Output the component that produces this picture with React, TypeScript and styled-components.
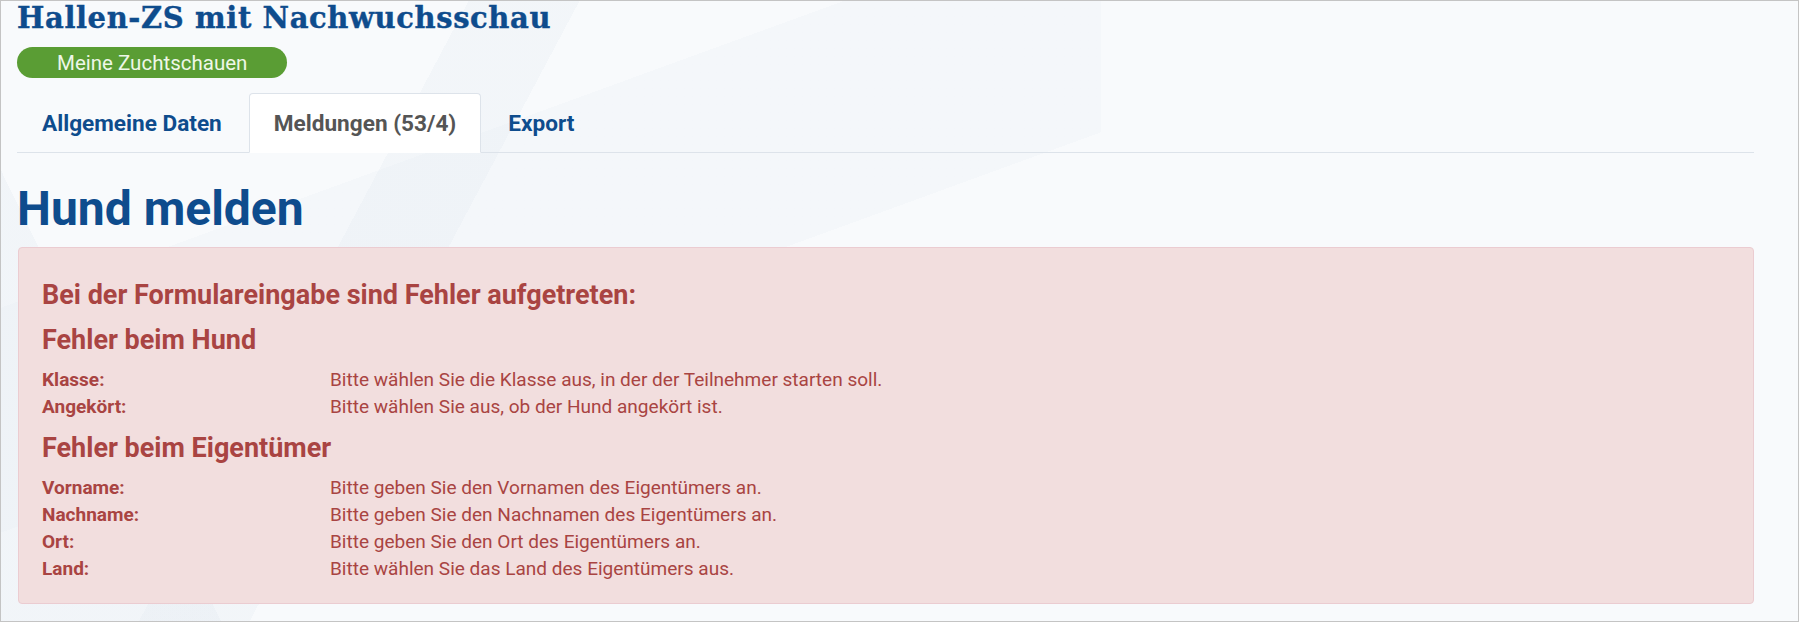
import React from "react";
import styled, { createGlobalStyle } from "styled-components";

const GlobalStyle = createGlobalStyle`
  html, body {
    margin: 0;
    padding: 0;
  }
  body {
    font-family: Roboto, "Noto Sans", Arial, sans-serif;
    background: #fff;
  }
  * {
    box-sizing: border-box;
  }
`;

const Page = styled.div`
  width: 1799px;
  height: 622px;
  overflow: hidden;
  border: 1px solid #c4c4c4;
  padding: 0 44px 0 16px;
  background-color: #f8fafc;
  background-image:
    linear-gradient(118deg, transparent 0 38%, rgba(222, 230, 238, 0.22) 38% 47%, transparent 47%),
    linear-gradient(64deg, rgba(226, 233, 240, 0.3) 0 22%, transparent 22%),
    linear-gradient(160deg, transparent 0 30%, rgba(232, 238, 244, 0.25) 30% 52%, transparent 52%);
  background-size: 900px 622px, 700px 622px, 1100px 622px;
  background-repeat: no-repeat;
`;

const Title = styled.h1`
  margin: 0;
  font-family: "DejaVu Serif", "Liberation Serif", serif;
  font-weight: 700;
  font-size: 29px;
  line-height: 34px;
  letter-spacing: 0.6px;
  color: #0e4c8d;
  -webkit-text-stroke: 0.4px #0e4c8d;
`;

const PillLink = styled.a`
  display: inline-flex;
  align-items: center;
  justify-content: center;
  height: 31px;
  margin-top: 12px;
  padding: 0 40px;
  border-radius: 16px;
  background: #5a9d34;
  color: #eef7e8;
  font-size: 20.5px;
  text-decoration: none;
`;

const TabBar = styled.ul`
  display: flex;
  margin: 15px 0 0;
  padding: 0;
  list-style: none;
  border-bottom: 1px solid #dde3ea;
`;

const Tab = styled.li<{ $active?: boolean }>`
  display: flex;
  align-items: center;
  height: 60px;
  margin: 0 2px -1px 0;
  padding: 0 24px;
  border: 1px solid ${({ $active }) => ($active ? "#dde3ea" : "transparent")};
  border-bottom-color: ${({ $active }) => ($active ? "#fff" : "transparent")};
  border-radius: 4px 4px 0 0;
  background: ${({ $active }) => ($active ? "#fff" : "transparent")};
  color: ${({ $active }) => ($active ? "#555" : "#0e4c8d")};
  font-size: 22.6px;
  font-weight: 700;
`;

const Heading = styled.h2`
  margin: 30px 0 11px;
  font-size: 48px;
  font-weight: 700;
  line-height: 52.8px;
  color: #0e4c8d;
`;

const Alert = styled.div`
  margin-left: 1px;
  padding: 32px 23px 21px;
  border: 1px solid #ebccd1;
  border-radius: 4px;
  background: #f2dede;
  color: #a94442;
`;

const AlertTitle = styled.h3`
  margin: 0 0 15px;
  font-size: 27px;
  font-weight: 700;
  line-height: 30px;
`;

const GroupTitle = styled.h4`
  margin: 0 0 11px;
  font-size: 27px;
  font-weight: 700;
  line-height: 30px;
`;

const ErrorList = styled.dl`
  display: grid;
  grid-template-columns: 288px 1fr;
  margin: 0 0 13px;
  font-size: 19.05px;
  line-height: 27px;

  &:last-child {
    margin-bottom: 0;
  }
`;

const Field = styled.dt`
  font-weight: 700;
`;

const Message = styled.dd`
  margin: 0;
`;

type ErrorGroup = { title: string; errors: [string, string][] };

const groups: ErrorGroup[] = [
  {
    title: "Fehler beim Hund",
    errors: [
      ["Klasse:", "Bitte wählen Sie die Klasse aus, in der der Teilnehmer starten soll."],
      ["Angekört:", "Bitte wählen Sie aus, ob der Hund angekört ist."],
    ],
  },
  {
    title: "Fehler beim Eigentümer",
    errors: [
      ["Vorname:", "Bitte geben Sie den Vornamen des Eigentümers an."],
      ["Nachname:", "Bitte geben Sie den Nachnamen des Eigentümers an."],
      ["Ort:", "Bitte geben Sie den Ort des Eigentümers an."],
      ["Land:", "Bitte wählen Sie das Land des Eigentümers aus."],
    ],
  },
];

const tabs = ["Allgemeine Daten", "Meldungen (53/4)", "Export"];

export default function App() {
  return (
    <Page>
      <GlobalStyle />
      <Title>Hallen-ZS mit Nachwuchsschau</Title>
      <PillLink href="#">Meine Zuchtschauen</PillLink>
      <TabBar>
        {tabs.map((t, i) => (
          <Tab key={t} $active={i === 1}>
            {t}
          </Tab>
        ))}
      </TabBar>
      <Heading>Hund melden</Heading>
      <Alert>
        <AlertTitle>Bei der Formulareingabe sind Fehler aufgetreten:</AlertTitle>
        {groups.map((g) => (
          <React.Fragment key={g.title}>
            <GroupTitle>{g.title}</GroupTitle>
            <ErrorList>
              {g.errors.map(([field, msg]) => (
                <React.Fragment key={field}>
                  <Field>{field}</Field>
                  <Message>{msg}</Message>
                </React.Fragment>
              ))}
            </ErrorList>
          </React.Fragment>
        ))}
      </Alert>
    </Page>
  );
}
